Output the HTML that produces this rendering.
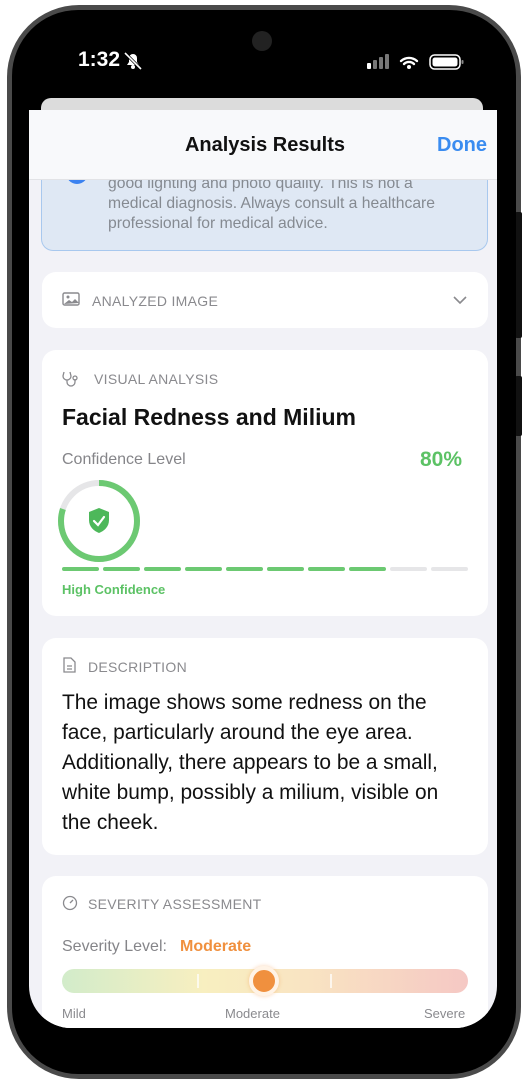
<!DOCTYPE html>
<html><head><meta charset="utf-8"><style>
*{margin:0;padding:0;box-sizing:border-box}
body{width:528px;height:1086px;background:#fff;position:relative;overflow:hidden;font-family:"Liberation Sans",sans-serif}
.a{position:absolute}
.card{position:absolute;left:42px;width:446px;background:#fff;border-radius:14px}
.lbl{position:absolute;font-size:14px;color:#8a8a8e;letter-spacing:.3px}
.nw{white-space:nowrap}
#scr{position:absolute;left:0;top:0;width:528px;height:1028px;clip-path:inset(98px 31px 0 29px round 0 0 42px 42px)}
</style></head><body>
<div class="a" style="left:7px;top:5px;width:514px;height:1074px;border-radius:72px;background:#4a4a4a"></div>
<div class="a" style="left:515px;top:212px;width:7px;height:126px;background:#111;border-radius:2px"></div>
<div class="a" style="left:515px;top:376px;width:7px;height:60px;background:#111;border-radius:2px"></div>
<div class="a" style="left:12px;top:10px;width:504px;height:1064px;border-radius:66px;background:#000"></div>
<div class="a" style="left:252px;top:31px;width:20px;height:20px;border-radius:50%;background:#222"></div>
<div class="a nw" style="left:78px;top:48px;color:#fff;font-size:21px;font-weight:bold">1:32</div>
<svg class="a" style="left:122px;top:51px" width="22" height="20" viewBox="0 0 22 20"><path d="M5 14h12l-2-3V7a4 4 0 0 0-8 0v4z" fill="#fff"/><circle cx="11" cy="16" r="2" fill="#fff"/><path d="M3 2l16 16" stroke="#000" stroke-width="3"/><path d="M3 2l16 16" stroke="#fff" stroke-width="1.6"/></svg>
<svg class="a" style="left:366px;top:52px" width="100" height="20"><rect x="1" y="11" width="4" height="6" rx="1" fill="#fff"/><rect x="7" y="8" width="4" height="9" rx="1" fill="#777"/><rect x="13" y="5" width="4" height="12" rx="1" fill="#777"/><rect x="19" y="2" width="4" height="15" rx="1" fill="#777"/><path d="M35 9a12 12 0 0 1 16 0M38 12a7 7 0 0 1 10 0" stroke="#fff" stroke-width="2.4" fill="none" stroke-linecap="round"/><circle cx="43" cy="15" r="2" fill="#fff"/><rect x="64" y="3" width="30" height="14" rx="4.5" fill="none" stroke="#fff" stroke-width="1.5"/><rect x="66.5" y="5.5" width="25" height="9" rx="2.5" fill="#fff"/><rect x="95.5" y="8" width="2" height="4" rx="1" fill="#888"/></svg>
<div id="scr">
<div class="a" style="left:29px;top:110px;width:468px;height:918px;background:#f2f2f7"></div>
<div class="a" style="left:41px;top:98px;width:442px;height:20px;border-radius:10px 10px 0 0;background:#dcdcdc"></div>
<div class="a" style="left:41px;top:160px;width:447px;height:91px;border-radius:0 0 12px 12px;background:#dfe8f4;border:1px solid #a8c8ee;border-top:none"></div>
<div class="a" style="left:66px;top:170px;width:22px;height:14px;border-radius:0 0 11px 11px;background:#3b82f0"></div>
<div class="a nw" style="left:108px;top:174px;font-size:15.7px;line-height:20px;color:#858a91">good lighting and photo quality. This is not a<br>medical diagnosis. Always consult a healthcare<br>professional for medical advice.</div>
<div class="a" style="left:29px;top:110px;width:468px;height:70px;background:#f8f9fb;border-bottom:1px solid #e2e3e6"></div>
<div class="a nw" style="left:0;width:530px;text-align:center;top:134px;font-size:20px;font-weight:bold;color:#111">Analysis Results</div>
<div class="a nw" style="left:437px;top:134px;font-size:20px;font-weight:bold;color:#3a8cf0">Done</div>
<div class="card" style="top:272px;height:56px">
<svg class="a" style="left:20px;top:20px" width="18" height="15"><rect x="1" y="1" width="16" height="12" rx="1.5" fill="none" stroke="#8a8a8e" stroke-width="1.4"/><circle cx="6" cy="5" r="1.5" fill="#8a8a8e"/><path d="M2 12l5-4 3 2 3-3 4 4z" fill="#8a8a8e"/></svg>
<div class="lbl nw" style="left:50px;top:21px">ANALYZED IMAGE</div>
<svg class="a" style="left:410px;top:22px" width="16" height="12"><path d="M2 3l6 6 6-6" stroke="#8a8a8e" stroke-width="1.6" fill="none"/></svg>
</div>
<div class="card" style="top:350px;height:266px">
<svg class="a" style="left:20px;top:20px" width="20" height="18" viewBox="0 0 20 18" fill="none" stroke="#8a8a8e" stroke-width="1.3"><path d="M2 2l-1 4a4 4 0 0 0 8 0l-1-4M5 10v2a4 4 0 0 0 8 0v-3"/><circle cx="13" cy="8" r="2"/></svg>
<div class="lbl nw" style="left:52px;top:21px">VISUAL ANALYSIS</div>
<div class="a nw" style="left:20px;top:54px;font-size:23px;font-weight:bold;color:#111">Facial Redness and Milium</div>
<div class="a nw" style="left:20px;top:101px;font-size:16px;color:#858589">Confidence Level</div>
<div class="a nw" style="left:378px;top:98px;font-size:21px;font-weight:bold;color:#5cc265">80%</div>
<svg class="a" style="left:14px;top:128px" width="86" height="86" viewBox="0 0 86 86"><circle cx="43" cy="43" r="38" fill="none" stroke="#e6e6e8" stroke-width="6"/><circle cx="43" cy="43" r="38" fill="none" stroke="#6cc972" stroke-width="6" stroke-dasharray="191 239" transform="rotate(-90 43 43)"/><path d="M43 30l10 4v8c0 7-5 11-10 13-5-2-10-6-10-13v-8z" fill="#4db85a"/><path d="M38 43l4 4 6-8" stroke="#fff" stroke-width="2.2" fill="none" stroke-linecap="round"/></svg>
<div class="a" style="left:20px;top:217px;width:406px;height:4px;display:flex;gap:4px">
<div style="flex:1;background:#6cc972;border-radius:2px"></div><div style="flex:1;background:#6cc972;border-radius:2px"></div><div style="flex:1;background:#6cc972;border-radius:2px"></div><div style="flex:1;background:#6cc972;border-radius:2px"></div><div style="flex:1;background:#6cc972;border-radius:2px"></div><div style="flex:1;background:#6cc972;border-radius:2px"></div><div style="flex:1;background:#6cc972;border-radius:2px"></div><div style="flex:1;background:#6cc972;border-radius:2px"></div><div style="flex:1;background:#e6e6e8;border-radius:2px"></div><div style="flex:1;background:#e6e6e8;border-radius:2px"></div></div>
<div class="a nw" style="left:20px;top:232px;font-size:13px;font-weight:bold;color:#5cc265">High Confidence</div>
</div>
<div class="card" style="top:638px;height:217px">
<svg class="a" style="left:20px;top:19px" width="14" height="16"><path d="M2 1h7l4 4v10H2z" fill="none" stroke="#8a8a8e" stroke-width="1.3"/><path d="M5 9h5M5 12h5" stroke="#8a8a8e" stroke-width="1.2"/></svg>
<div class="lbl nw" style="left:46px;top:21px">DESCRIPTION</div>
<div class="a nw" style="left:20px;top:50px;font-size:20.9px;line-height:30px;color:#111">The image shows some redness on the<br>face, particularly around the eye area.<br>Additionally, there appears to be a small,<br>white bump, possibly a milium, visible on<br>the cheek.</div>
</div>
<div class="a" style="left:42px;top:876px;width:446px;height:160px;background:#fff;border-radius:14px">
<svg class="a" style="left:20px;top:19px" width="16" height="16"><circle cx="8" cy="8" r="6.5" fill="none" stroke="#8a8a8e" stroke-width="1.3"/><path d="M8 8l3-3" stroke="#8a8a8e" stroke-width="1.3"/></svg>
<div class="lbl nw" style="left:46px;top:20px">SEVERITY ASSESSMENT</div>
<div class="a nw" style="left:20px;top:62px;font-size:16px;color:#858589">Severity Level:</div>
<div class="a nw" style="left:138px;top:62px;font-size:16px;font-weight:bold;color:#f0903e">Moderate</div>
<div class="a" style="left:20px;top:93px;width:406px;height:24px;border-radius:12px;background:linear-gradient(90deg,#d2ecca,#f8efc0 35%,#f9e4c2 60%,#f5c8c4)"></div>
<div class="a" style="left:155px;top:98px;width:2px;height:14px;background:#fff;opacity:.7"></div>
<div class="a" style="left:288px;top:98px;width:2px;height:14px;background:#fff;opacity:.7"></div>
<div class="a" style="left:207px;top:90px;width:30px;height:30px;border-radius:50%;background:#f0903e;border:4px solid #fff3e6;box-shadow:0 0 4px rgba(240,144,62,.4)"></div>
<div class="a nw" style="left:20px;top:130px;font-size:13px;color:#8a8a8e">Mild</div>
<div class="a nw" style="left:183px;top:130px;font-size:13px;color:#8a8a8e">Moderate</div>
<div class="a nw" style="left:382px;top:130px;font-size:13px;color:#8a8a8e">Severe</div>
</div>
</div>
</body></html>
